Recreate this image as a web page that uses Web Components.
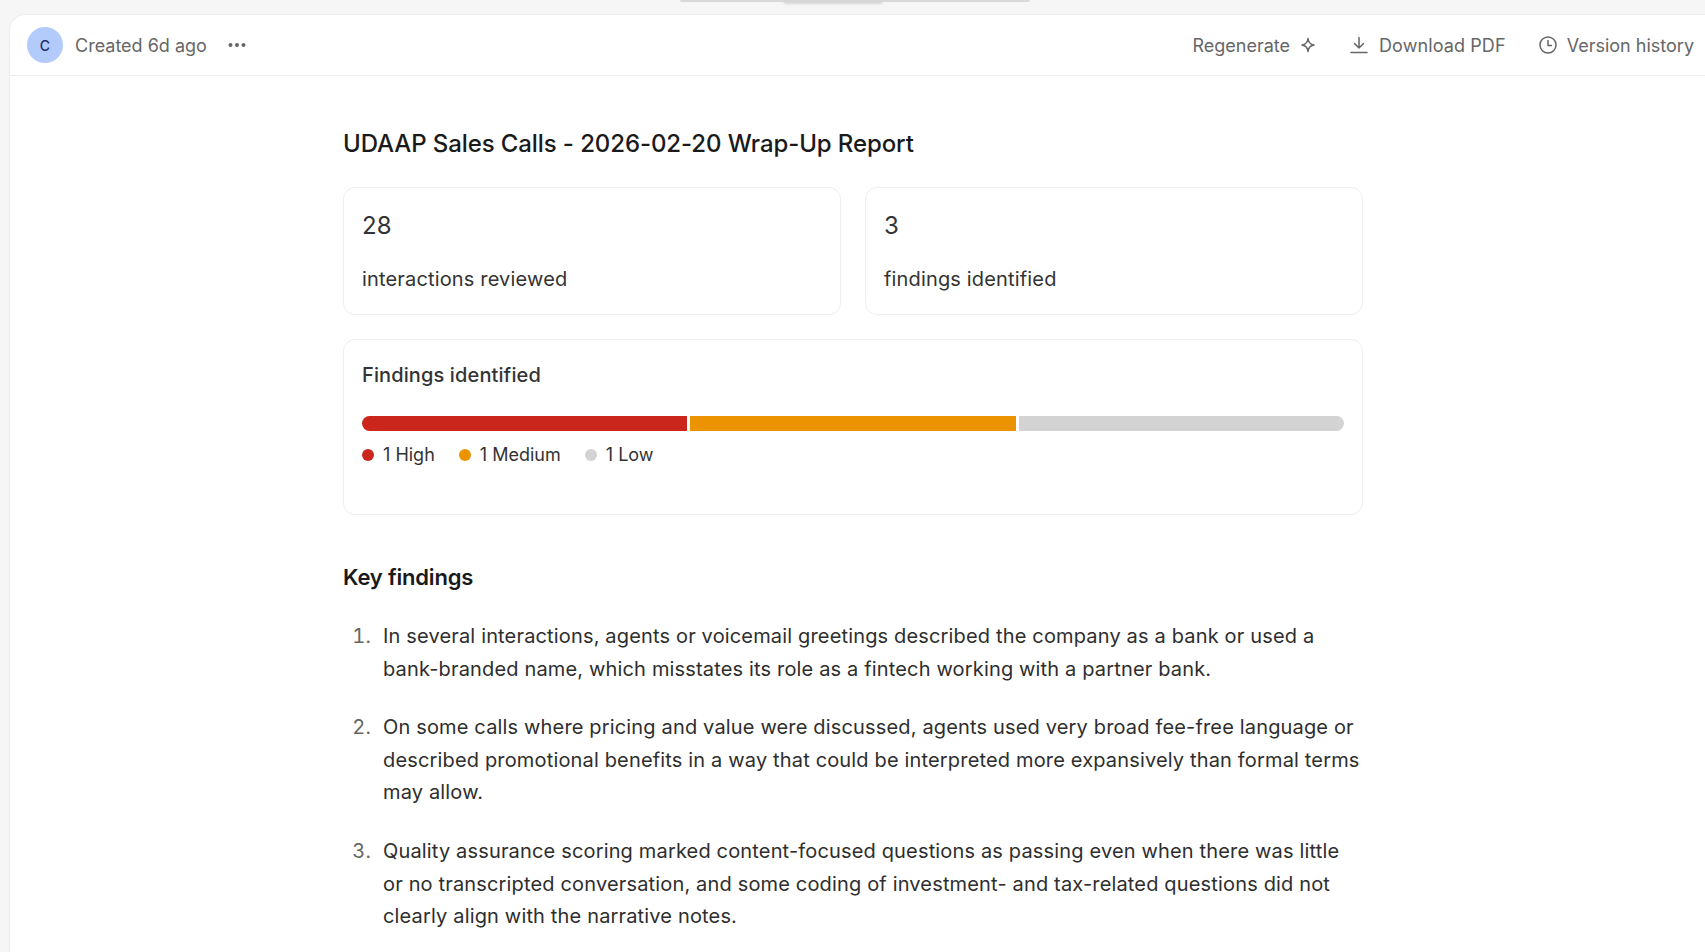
<!DOCTYPE html>
<html lang="en">
<head>
<meta charset="utf-8">
<title>UDAAP Sales Calls</title>
<style>
  html, body { margin: 0; height: 100%; overflow: hidden; background: #f6f6f6; }
  body { font-family: Inter, "Liberation Sans", sans-serif; }
</style>
</head>
<body>
<report-page>
  <report-toolbar slot="toolbar"></report-toolbar>
  <h1 slot="title">UDAAP Sales Calls - 2026-02-20 Wrap-Up Report</h1>
  <stat-card slot="stats" value="28" label="interactions reviewed"></stat-card>
  <stat-card slot="stats" value="3" label="findings identified"></stat-card>
  <findings-card slot="chart"></findings-card>
  <key-findings slot="findings">
    <finding-item number="1">In several interactions, agents or voicemail greetings described the company as a bank or used a bank-branded name, which misstates its role as a fintech working with a partner bank.</finding-item>
    <finding-item number="2">On some calls where pricing and value were discussed, agents used very broad fee-free language or described promotional benefits in a way that could be interpreted more expansively than formal terms may allow.</finding-item>
    <finding-item number="3">Quality assurance scoring marked content-focused questions as passing even when there was little or no transcripted conversation, and some coding of investment- and tax-related questions did not clearly align with the narrative notes.</finding-item>
  </key-findings>
</report-page>

<script>
// page shell: grey strip on top, white rounded panel under it
class ReportPage extends HTMLElement {
  constructor() {
    super();
    this.attachShadow({ mode: "open" });
    this.shadowRoot.innerHTML = `
      <style>
        :host { display: block; height: 100vh; overflow: hidden; }
        .strip { height: 14px; }
        .handle {
          display: flex;
          width: 350px; height: 2px; margin-left: 680px;
          background: #d9d9d9; border-radius: 0 0 6px 6px;
        }
        .handle i {
          display: block; width: 100px; height: 4px; margin-left: 103px;
          background: #d6d6d6; border-radius: 0 0 8px 8px; filter: blur(1px);
        }
        .panel {
          margin-left: 9px;
          height: calc(100vh - 14px);
          background: #fff;
          border: 1px solid #ededed;
          border-right: 0;
          border-bottom: 0;
          border-top-left-radius: 16px;
          box-sizing: border-box;
        }
        .content { width: 1020px; margin-left: 333px; }
        ::slotted(h1) {
          margin: 0;
          padding-top: 52px;
          font-size: 24px;
          line-height: 32px;
          font-weight: 500;
          letter-spacing: -0.1px;
          color: #1a1a1a;
        }
        .stats {
          display: grid;
          grid-template-columns: 1fr 1fr;
          gap: 24px;
          margin: 27px 0 24px;
        }
      </style>
      <div class="strip"><div class="handle"><i></i></div></div>
      <div class="panel">
        <slot name="toolbar"></slot>
        <div class="content">
          <slot name="title"></slot>
          <div class="stats"><slot name="stats"></slot></div>
          <slot name="chart"></slot>
          <slot name="findings"></slot>
        </div>
      </div>
    `;
  }
}

class ReportToolbar extends HTMLElement {
  constructor() {
    super();
    this.attachShadow({ mode: "open" });
    this.shadowRoot.innerHTML = `
      <style>
        :host {
          display: flex;
          align-items: center;
          justify-content: space-between;
          height: 60px;
          padding: 0 11px 0 17px;
          border-bottom: 1px solid #ededed;
          color: #666;
          font-size: 18px;
        }
        .left, .right { display: flex; align-items: center; }
        .avatar {
          width: 36px; height: 36px; border-radius: 50%;
          background: #b3cbfb; color: #1c2f6b;
          display: flex; align-items: center; justify-content: center;
          font-size: 14px; font-weight: 500;
          margin-right: 12px;
        }
        .dots { margin-left: 20px; display: flex; }
        .action { display: flex; align-items: center; }
        svg { display: block; fill: none; stroke: #666; stroke-width: 1.5; stroke-linecap: round; stroke-linejoin: round; }
      </style>
      <div class="left">
        <span class="avatar">C</span>
        <span>Created 6d ago</span>
        <svg class="dots" width="20" height="20" viewBox="0 0 20 20" style="stroke:none;fill:#666"><circle cx="3.5" cy="10" r="2"/><circle cx="10" cy="10" r="2"/><circle cx="16.5" cy="10" r="2"/></svg>
      </div>
      <div class="right">
        <span class="action">Regenerate
          <svg style="margin-left:9px" width="18" height="18" viewBox="0 0 18 18"><path d="M9 2.5 C9.4 6.6 11 8.4 15 9 C11 9.6 9.4 11.4 9 15.5 C8.6 11.4 7 9.6 3 9 C7 8.4 8.6 6.6 9 2.5 Z"/></svg>
        </span>
        <span class="action" style="margin-left:32px; letter-spacing:.1px">
          <svg style="margin-right:10px" width="20" height="20" viewBox="0 0 20 20"><path d="M10 2.5V13M5.5 8.5 10 13l4.5-4.5M2 17.5h16"/></svg>
          Download PDF
        </span>
        <span class="action" style="margin-left:32px">
          <svg style="margin-right:9px" width="20" height="20" viewBox="0 0 20 20"><circle cx="10" cy="10" r="8"/><path d="M10 5.5V10.5H13.5"/></svg>
          Version history
        </span>
      </div>
    `;
  }
}

class StatCard extends HTMLElement {
  constructor() {
    super();
    this.attachShadow({ mode: "open" });
  }
  connectedCallback() {
    this.shadowRoot.innerHTML = `
      <style>
        :host {
          display: block;
          height: 128px;
          padding: 22px 18px 0;
          box-sizing: border-box;
          border: 1px solid #eeeeee;
          border-radius: 12px;
          color: #333;
        }
        .value { font-size: 24px; line-height: 32px; }
        .label { font-size: 20px; line-height: 32px; margin-top: 21px; letter-spacing: .16px; }
      </style>
      <div class="value">${this.getAttribute("value")}</div>
      <div class="label">${this.getAttribute("label")}</div>
    `;
  }
}

const SEGMENTS = [
  { name: "High", count: 1, color: "#cb261c" },
  { name: "Medium", count: 1, color: "#ec9302" },
  { name: "Low", count: 1, color: "#d4d3d4" }
];

class FindingsCard extends HTMLElement {
  constructor() {
    super();
    this.attachShadow({ mode: "open" });
    const bars = SEGMENTS.map(s => `<i style="background:${s.color}"></i>`).join("");
    const legend = SEGMENTS.map(s =>
      `<span class="item"><b style="background:${s.color}"></b>${s.count} ${s.name}</span>`).join("");
    this.shadowRoot.innerHTML = `
      <style>
        :host {
          display: block;
          height: 176px;
          padding: 19px 18px 0;
          box-sizing: border-box;
          border: 1px solid #eeeeee;
          border-radius: 12px;
          color: #333;
        }
        .title { font-size: 20px; line-height: 32px; font-weight: 500; letter-spacing: .12px; }
        .bar { display: flex; gap: 3px; height: 15px; margin-top: 25px; border-radius: 8px; overflow: hidden; }
        .bar i { flex: 1; display: block; }
        .legend { display: flex; gap: 24px; margin-top: 8px; font-size: 18px; line-height: 32px; }
        .item { display: flex; align-items: center; }
        .item b { width: 12px; height: 12px; border-radius: 50%; margin-right: 9px; }
      </style>
      <div class="title">Findings identified</div>
      <div class="bar">${bars}</div>
      <div class="legend">${legend}</div>
    `;
  }
}

class KeyFindings extends HTMLElement {
  constructor() {
    super();
    this.attachShadow({ mode: "open" });
    this.shadowRoot.innerHTML = `
      <style>
        :host { display: block; color: #2e2e2e; }
        h2 { margin: 46px 0 27px; font-size: 22px; line-height: 32px; font-weight: 600; letter-spacing: -.18px; color: #1a1a1a; }
        .list { display: flex; flex-direction: column; gap: 26px; }
      </style>
      <h2>Key findings</h2>
      <div class="list"><slot></slot></div>
    `;
  }
}

class FindingItem extends HTMLElement {
  constructor() {
    super();
    this.attachShadow({ mode: "open" });
  }
  connectedCallback() {
    this.shadowRoot.innerHTML = `
      <style>
        :host {
          display: grid;
          grid-template-columns: 28px 1fr;
          column-gap: 12px;
          font-size: 20px;
          line-height: 32.6px;
          letter-spacing: .16px;
        }
        .num { text-align: right; color: #666; font-variant-numeric: tabular-nums; }
      </style>
      <span class="num">${this.getAttribute("number")}.</span>
      <span><slot></slot></span>
    `;
  }
}

customElements.define("report-page", ReportPage);
customElements.define("report-toolbar", ReportToolbar);
customElements.define("stat-card", StatCard);
customElements.define("findings-card", FindingsCard);
customElements.define("key-findings", KeyFindings);
customElements.define("finding-item", FindingItem);
</script>
</body>
</html>
